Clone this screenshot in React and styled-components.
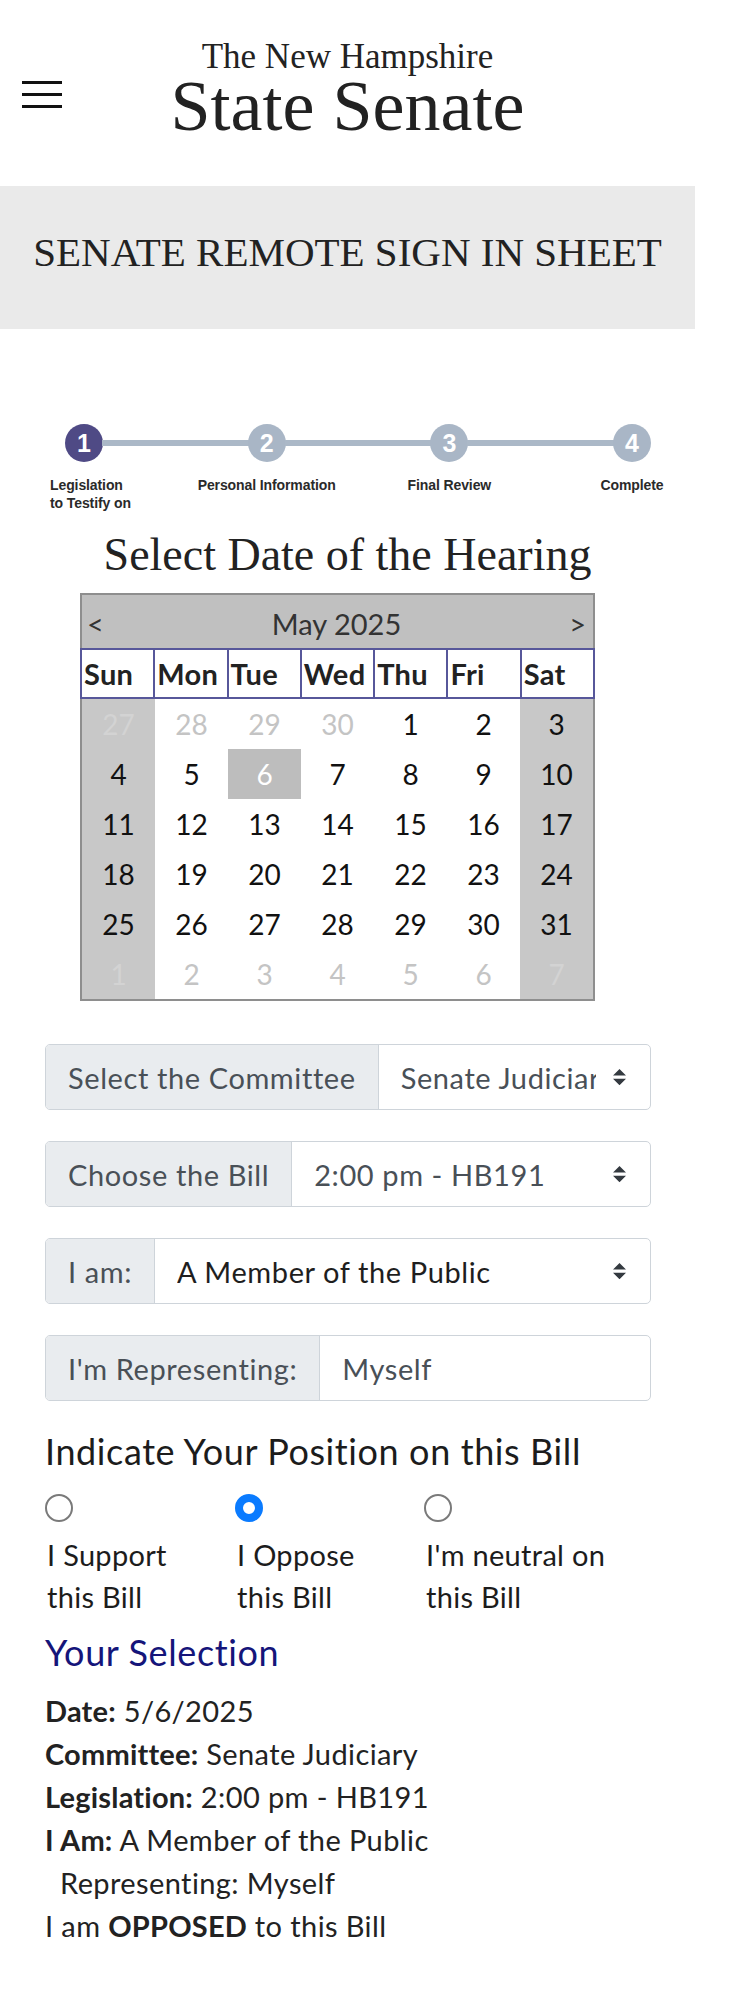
import React from 'react'
import styled, { createGlobalStyle } from 'styled-components'

const GlobalStyle = createGlobalStyle`
  body {
    margin: 0;
    background: #fff;
    font-family: "Lato", "Open Sans", sans-serif;
    color: #212529;
  }
`

const Page = styled.div`
  width: 695px;
  padding-bottom: 40px;
`

const Header = styled.header`
  display: grid;
  grid-template-columns: 1fr auto 1fr;
  padding: 41px 0 47px;
`

const Burger = styled.div`
  display: flex;
  flex-direction: column;
  gap: 9px;
  margin: 40px 0 0 22px;
  justify-self: start;
  align-self: start;

  span {
    display: block;
    width: 40px;
    height: 3px;
    background: #111;
  }
`

const TitleBlock = styled.div`
  text-align: center;
  font-family: "Liberation Serif", serif;
  color: #222;
`

const Small = styled.div`
  font-size: 35px;
  line-height: 32px;
`

const Big = styled.div`
  font-size: 72px;
  line-height: 66px;
`

const Band = styled.div`
  height: 143px;
  background: #eaeaea;
  display: flex;
  align-items: center;
  justify-content: center;
  padding-bottom: 12px;
  box-sizing: border-box;
  font-family: "Liberation Serif", serif;
  font-size: 41px;
  line-height: 48px;
  color: #222;
`

const Stepper = styled.div`
  display: grid;
  grid-template-columns: 38px 1fr 38px 1fr 38px 1fr 38px;
  row-gap: 14px;
  width: 586px;
  margin: 95px 0 0 65px;
`

const Circle = styled.div`
  width: 38px;
  height: 38px;
  border-radius: 50%;
  background: ${p => (p.$active ? '#4f4a85' : '#a9b6c6')};
  color: #fff;
  display: flex;
  align-items: center;
  justify-content: center;
  font-family: "Liberation Sans", sans-serif;
  font-weight: bold;
  font-size: 25px;
`

const Segment = styled.div`
  height: 6px;
  align-self: center;
  background: #abb8c7;
  margin: 0 -1px;
`

const StepLabel = styled.div`
  grid-row: 2;
  grid-column: ${p => p.$col};
  justify-self: ${p => (p.$first ? 'start' : 'center')};
  margin-left: ${p => (p.$first ? '-15px' : '0')};
  white-space: nowrap;
  font-family: "Liberation Sans", sans-serif;
  font-weight: bold;
  font-size: 14px;
  line-height: 18px;
  letter-spacing: -0.1px;
  color: #2a2a2a;
`

const SectionTitle = styled.h2`
  margin: 17px 0 0;
  text-align: center;
  font-family: "Liberation Serif", serif;
  font-weight: normal;
  font-size: 46px;
  line-height: 52px;
  color: #222;
`

const Calendar = styled.div`
  width: 515px;
  margin: 12px 0 0 80px;
`

const MonthBar = styled.div`
  height: 55px;
  box-sizing: border-box;
  display: flex;
  align-items: center;
  justify-content: space-between;
  padding: 4px 7px 0 5px;
  background: #c0c0c0;
  border: 2px solid #8e8e8e;
  border-bottom: none;
  font-size: 29px;
  color: #333;
`

const DayHead = styled.div`
  display: grid;
  grid-template-columns: repeat(7, 1fr);
  gap: 2px;
  padding: 2px;
  background: #57579a;
`

const DayName = styled.div`
  height: 47px;
  background: #fff;
  display: flex;
  align-items: center;
  padding-left: 2px;
  font-weight: bold;
  font-size: 29px;
  letter-spacing: 0.3px;
  color: #222;
  overflow: hidden;
`

const Days = styled.div`
  display: grid;
  grid-template-columns: repeat(7, 1fr);
  grid-auto-rows: 50px;
  border: 2px solid #8e8e8e;
  border-top: none;
`

const Day = styled.div`
  display: flex;
  align-items: center;
  justify-content: center;
  font-size: 28px;
  background: ${p => (p.$selected ? '#bdbdbd' : p.$weekend ? '#c8c8c8' : '#fff')};
  color: ${p =>
    p.$selected ? '#fff' : p.$other ? (p.$weekend ? '#d3d3d3' : '#c4c4c4') : '#111'};
`

const Fields = styled.div`
  display: flex;
  flex-direction: column;
  gap: 31px;
  width: 606px;
  margin: 43px 0 0 45px;
`

const InputGroup = styled.div`
  display: flex;
  height: 66px;
  border: 1px solid #ced4da;
  border-radius: 5px;
  overflow: hidden;
  box-sizing: border-box;
  font-size: 29px;
  letter-spacing: 0.6px;
`

const GroupLabel = styled.div`
  display: flex;
  align-items: center;
  padding: 0 22px;
  background: #e9ecef;
  border-right: 1px solid #ced4da;
  color: #495057;
  white-space: nowrap;
`

const GroupValue = styled.div`
  position: relative;
  flex: 1;
  min-width: 0;
  display: flex;
  align-items: center;
  padding: 0 ${p => (p.$select ? '54px' : '22px')} 0 22px;
  color: ${p => (p.$dark ? '#1e1e1e' : '#495057')};
  white-space: nowrap;
  overflow: hidden;

  span {
    overflow: hidden;
  }

  svg {
    position: absolute;
    right: 24px;
    top: 50%;
    transform: translateY(-50%);
  }
`

const Heading = styled.h3`
  margin: ${p => p.$top}px 0 0 45px;
  font-weight: normal;
  font-size: 36px;
  line-height: 40px;
  letter-spacing: 0.6px;
  color: ${p => p.$color || '#1c1c1c'};
`

const Options = styled.div`
  display: grid;
  grid-template-columns: 190px 189px 200px;
  margin: 23px 0 0 45px;
`

const Option = styled.label`
  display: flex;
  flex-direction: column;
  gap: 12px;
  font-size: 29px;
  line-height: 42px;
  color: #1c1c1c;
  letter-spacing: 0.3px;
`

const Radio = styled.span`
  width: 28px;
  height: 28px;
  box-sizing: border-box;
  border-radius: 50%;
  border: ${p => (p.$checked ? '8px solid #0a7bff' : '2.5px solid #7a7a7a')};
  background: #fff;
`

const OptionText = styled.span`
  padding-left: 2px;
`

const Summary = styled.div`
  margin: 17px 0 0 45px;
  font-size: 29px;
  line-height: 43px;
  color: #222;
  letter-spacing: 0.4px;

  b {
    font-weight: bold;
    letter-spacing: 0.2px;
  }
`

const Indent = styled.div`
  padding-left: 15px;
`

const Arrows = () => (
  <svg width="13" height="17" viewBox="0 0 4 5">
    <path d="M2 0L0 2h4zm0 5L0 3h4z" fill="#343a40" />
  </svg>
)

const weekNames = ['Sun', 'Mon', 'Tue', 'Wed', 'Thu', 'Fri', 'Sat']

const days = [
  [27, true], [28, true], [29, true], [30, true], [1], [2], [3],
  [4], [5], [6], [7], [8], [9], [10],
  [11], [12], [13], [14], [15], [16], [17],
  [18], [19], [20], [21], [22], [23], [24],
  [25], [26], [27], [28], [29], [30], [31],
  [1, true], [2, true], [3, true], [4, true], [5, true], [6, true], [7, true],
]

const steps = ['Personal Information', 'Final Review', 'Complete']

export default function App () {
  return (
    <Page>
      <GlobalStyle />
      <Header>
        <Burger><span /><span /><span /></Burger>
        <TitleBlock>
          <Small>The New Hampshire</Small>
          <Big>State Senate</Big>
        </TitleBlock>
      </Header>

      <Band>SENATE REMOTE SIGN IN SHEET</Band>

      <Stepper>
        <Circle $active>1</Circle>
        <Segment />
        <Circle>2</Circle>
        <Segment />
        <Circle>3</Circle>
        <Segment />
        <Circle>4</Circle>
        <StepLabel $col={1} $first>Legislation<br />to Testify on</StepLabel>
        {steps.map((s, i) => (
          <StepLabel key={s} $col={3 + i * 2}>{s}</StepLabel>
        ))}
      </Stepper>

      <SectionTitle>Select Date of the Hearing</SectionTitle>

      <Calendar>
        <MonthBar>
          <span>&lt;</span>
          <span>May 2025</span>
          <span>&gt;</span>
        </MonthBar>
        <DayHead>
          {weekNames.map(n => <DayName key={n}>{n}</DayName>)}
        </DayHead>
        <Days>
          {days.map(([n, other], i) => (
            <Day
              key={i}
              $other={other}
              $weekend={i % 7 === 0 || i % 7 === 6}
              $selected={i === 9}
            >
              {n}
            </Day>
          ))}
        </Days>
      </Calendar>

      <Fields>
        <InputGroup>
          <GroupLabel>Select the Committee</GroupLabel>
          <GroupValue $select><span>Senate Judiciary</span><Arrows /></GroupValue>
        </InputGroup>
        <InputGroup>
          <GroupLabel>Choose the Bill</GroupLabel>
          <GroupValue $select><span>2:00 pm - HB191</span><Arrows /></GroupValue>
        </InputGroup>
        <InputGroup>
          <GroupLabel>I am:</GroupLabel>
          <GroupValue $select $dark><span>A Member of the Public</span><Arrows /></GroupValue>
        </InputGroup>
        <InputGroup>
          <GroupLabel>I'm Representing:</GroupLabel>
          <GroupValue><span>Myself</span></GroupValue>
        </InputGroup>
      </Fields>

      <Heading $top={30}>Indicate Your Position on this Bill</Heading>

      <Options>
        <Option><Radio /><OptionText>I Support<br />this Bill</OptionText></Option>
        <Option><Radio $checked /><OptionText>I Oppose<br />this Bill</OptionText></Option>
        <Option><Radio /><OptionText>I'm neutral on<br />this Bill</OptionText></Option>
      </Options>

      <Heading $top={14} $color="#15157a">Your Selection</Heading>

      <Summary>
        <div><b>Date:</b> 5/6/2025</div>
        <div><b>Committee:</b> Senate Judiciary</div>
        <div><b>Legislation:</b> 2:00 pm - HB191</div>
        <div><b>I Am:</b> A Member of the Public</div>
        <Indent>Representing: Myself</Indent>
        <div>I am <b>OPPOSED</b> to this Bill</div>
      </Summary>
    </Page>
  )
}
